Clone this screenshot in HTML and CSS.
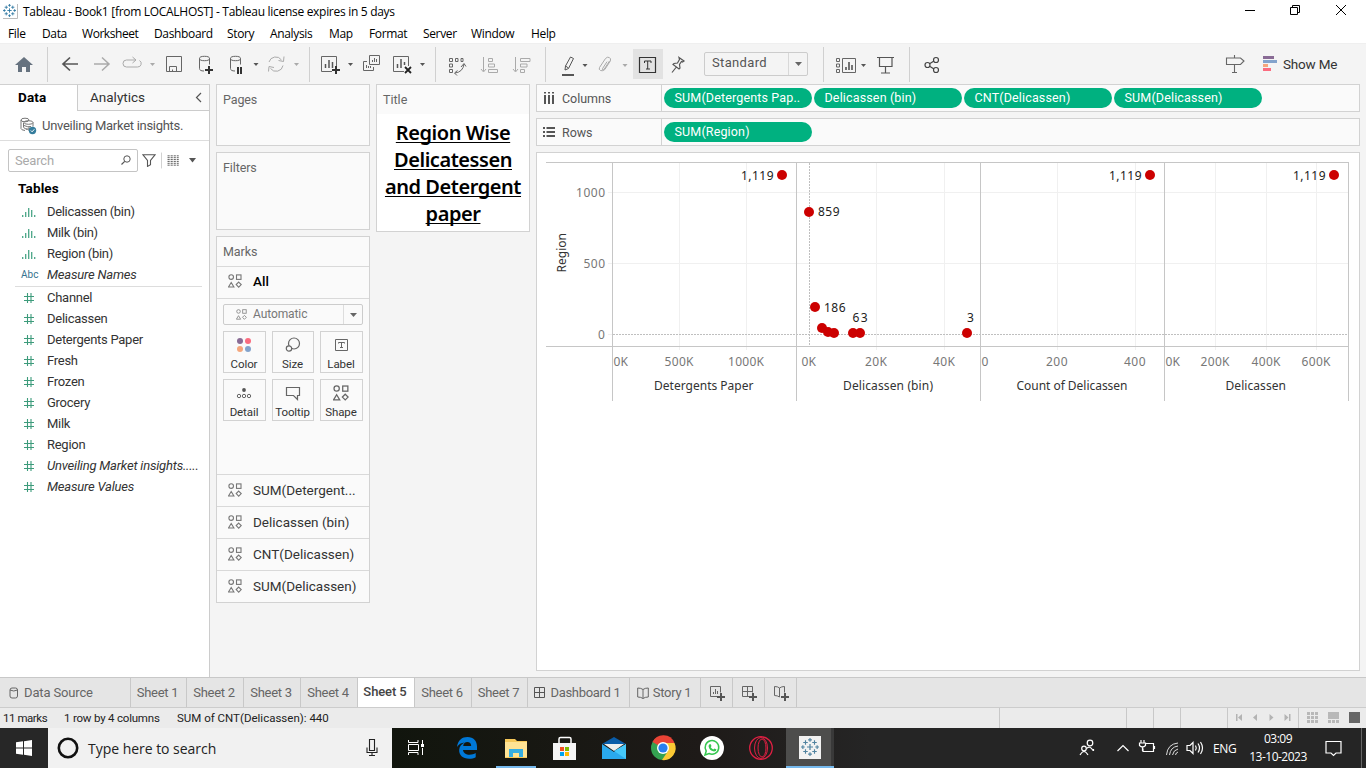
FILE: index.html
```html
<!DOCTYPE html>
<html lang="en">
<head>
<meta charset="utf-8">
<title>Tableau - Book1</title>
<link rel="stylesheet" href="styles.css">
</head>
<body>
<svg class="defs" width="0" height="0" aria-hidden="true">
  <symbol id="shapes" viewBox="0 0 14 14"><g fill="none" stroke="currentColor" stroke-width="1.1"><circle cx="3.2" cy="3.1" r="2.3"/><rect x="8.5" y=".9" width="4.500" height="4.500"/><path d="M3.2 8.500 5.900 13H.5ZM10.700 8.100l2.500 2.500-2.500 2.500-2.500-2.500Z"/></g></symbol>
  <symbol id="bins" viewBox="0 0 16 12"><path d="M1.700 11V9M4.700 11V6M7.700 11V2M10.700 11V4M13.700 11V9" stroke="currentColor" stroke-width="1.300"/></symbol>
  <symbol id="hash" viewBox="0 0 12 12"><path d="M1 4.500h10M1 8.500h10M4.500 1v10M8 1v10" stroke="currentColor" stroke-width="1.100"/></symbol>
  <symbol id="mark" viewBox="0 0 24 24"><g stroke="currentColor" fill="none"><path d="M12 8v8M8 12h8" stroke-width="1.600"/><path d="M12 0v5M9.500 2.500h5M12 19v5M9.500 21.500h5M0 12h5M2.500 9.500v5M19 12h5M21.500 9.500v5M6 3v6M3 6h6M18 3v6M15 6h6M6 15v6M3 18h6M18 15v6M15 18h6" stroke-width="1.500"/></g></symbol>
</svg>

<header class="titlebar">
  <svg class="app-icon" width="16" height="18" viewBox="0 0 16 18"><path d="M0 16.500h14.500V2" stroke="#bbb" fill="none"/><use href="#mark" x="0" y="2" width="13" height="13" color="#27749f"/></svg>
  <span class="win-title">Tableau - Book1 [from LOCALHOST] - Tableau license expires in 5 days</span>
  <svg class="win-controls" width="126" height="22" viewBox="1240 0 126 22"><g fill="none" stroke="#000"><path d="M1245 10.500h10M1290.500 7.500h7v7h-7zM1292.500 7.500v-2h7v7h-2M1336 5l10 10M1346 5l-10 10"/></g></svg>
</header>
<nav class="menubar">
  <span class="m1">File</span><span class="m2">Data</span><span class="m3">Worksheet</span><span class="m4">Dashboard</span><span class="m5">Story</span><span class="m6">Analysis</span><span class="m7">Map</span><span class="m8">Format</span><span class="m9">Server</span><span class="m10">Window</span><span class="m11">Help</span>
</nav>

<div class="toolbar">
  <svg width="47" viewBox="0 44 47 40"><path d="M24 57l9 8h-3v7h-4v-5h-4v5h-4v-7h-3z" fill="#66727f"/></svg>
  <i class="sep"></i>
  <svg width="38" viewBox="48 44 38 40"><path d="M78 64H63.500M70 57.500 63 64l7 6.500" stroke="#555" stroke-width="1.700"/></svg>
  <svg width="31" viewBox="86 44 31 40"><path d="M94 64h14.500M102 57.500l7 6.500-7 6.500" stroke="#aaa" stroke-width="1.500"/></svg>
  <svg width="43" viewBox="117 44 43 40"><path d="M135.500 60h-9a3.500 3.500 0 0 0 0 7h11a3.500 3.500 0 0 0 2-6.500M132.500 57l3.500 3-3.500 3" stroke="#aaa"/><path d="M150 63h5l-2.500 3z" fill="#aaa"/></svg>
  <svg width="30" viewBox="160 44 30 40"><path d="M166.500 56.500h15v15h-15zM169.500 71.500v-5h7v5M172.500 71.500v-2" stroke="#666"/></svg>
  <svg width="30" viewBox="190 44 30 40"><path d="M199.500 58.500v10q0 2.500 4.500 2.500M209.500 58.500v6" stroke="#666"/><ellipse cx="204.500" cy="58.500" rx="5" ry="2.200" stroke="#666"/><path d="M209 66v8M205 70h8" stroke="#333" stroke-width="2"/></svg>
  <svg width="42" viewBox="220 44 42 40"><path d="M230.500 58.500v10q0 2.500 4.500 2.500M240.500 58.500v6" stroke="#666"/><ellipse cx="235.500" cy="58.500" rx="5" ry="2.200" stroke="#666"/><path d="M238 67v7M241 67v7" stroke="#333" stroke-width="2"/><path d="M253.500 63h5l-2.500 3z" fill="#555"/></svg>
  <svg width="47" viewBox="262 44 47 40"><path d="M269 62a7 7 0 0 1 12.500-2M283 65.500a7 7 0 0 1-12.500 3M278.500 60.500l5 1 .5-5M274 67.500l-5-1-.5 5" stroke="#aaa"/><path d="M294 63h5l-2.500 3z" fill="#aaa"/></svg>
  <i class="sep"></i>
  <svg width="48" viewBox="310 44 48 40"><path d="M332 71.500h-10.500v-15h15V67" stroke="#666"/><path d="M325.500 68v-4M329 68v-8M332.500 68v-6" stroke="#555" stroke-width="1.500"/><path d="M336 66v8M332 70h8" stroke="#333" stroke-width="2"/><path d="M348 63h5l-2.500 3z" fill="#555"/></svg>
  <svg width="28" viewBox="358 44 28 40"><path d="M369.500 55.500h10v9h-10zM367 61.500h-3.500v9h10v-3.500M372.500 62v-2M374.500 62v-4M376.500 62v-3M366.500 68v-3M368.500 68v-2M370.500 68v-2" stroke="#666"/></svg>
  <svg width="49" viewBox="386 44 49 40"><path d="M404 71.500h-10.500v-15h15V66" stroke="#666"/><path d="M397.500 68v-4M401 68v-9M404.500 65v-3" stroke="#555" stroke-width="1.500"/><path d="M405 67l6 6M411 67l-6 6" stroke="#222" stroke-width="1.800"/><path d="M420 63h5l-2.500 3z" fill="#555"/></svg>
  <i class="sep"></i>
  <svg width="38" viewBox="436 44 38 40"><path d="M449.500 58.500h3v3h-3zM455.500 58.500h2.500v3h-2.500zM461 58.500h2v3h-2zM449.500 64h3v3h-3zM449.500 69.500h3v3h-3zM455 73q8-1 9-9M457.500 70.500l-3 2.500 2.500 2.500M461 67l3-3.500 2 3" stroke="#666"/></svg>
  <svg width="32" viewBox="474 44 32 40"><path d="M483.500 57v14M481 69l2.500 3 2.500-3M488.500 58.500h4v3h-4zM488.500 64h6v3h-6zM488.500 69.500h9v3h-9z" stroke="#aaa"/></svg>
  <svg width="39" viewBox="506 44 39 40"><path d="M515.500 57v14M513 69l2.500 3 2.500-3M520.500 58.500h9.500v3h-9.500zM520.500 64h6.500v3h-6.500zM520.500 69.500h4v3h-4z" stroke="#aaa"/></svg>
  <i class="sep"></i>
  <svg width="46" viewBox="546 44 46 40"><path d="M570.500 57l3 1.500-5 10-3.500 1.500.5-4zM565.500 66l3 2" stroke="#555"/><path d="M562 75h12" stroke="#555" stroke-width="2"/><path d="M582.500 64h5l-2.500 3z" fill="#555"/></svg>
  <svg width="41" viewBox="592 44 41 40"><path d="M609.500 61l-5.500 8.500q-1.500 2-3.500 1t-1-3l6-9q1.800-2 3.800-1t1 3.500l-5.500 8.500q-1.200 1.200-2 .5t0-1.800l4.200-6.500" stroke="#aaa"/><path d="M622.500 64h5l-2.500 3z" fill="#aaa"/></svg>
  <svg class="pressed" width="30" viewBox="633 49 30 30"><path d="M639.500 57.500h16v15h-16z" stroke="#333" stroke-width="1.200"/><path d="M644.500 63v-2h6.500v2M647.700 61v8M646 69h4" stroke="#333"/></svg>
  <svg width="41" viewBox="663 44 41 40"><path d="M679 57.500l5 3.500-1.500 1-1-.5-2 3 .5 3.500-1 1-6-4.500 1-1 3.500-.5 2-3.500zM676 67.500l-4 5" stroke="#555" stroke-width="1.200"/></svg>
  <div class="fit-select"><span>Standard</span><b><svg width="7" height="4" viewBox="0 0 7 4"><path d="M0 0h7L3.500 4z" fill="#666"/></svg></b></div>
  <i class="sep after-select"></i>
  <svg width="46" viewBox="824 44 46 40"><path d="M836.500 58.500h3v3h-3zM836.500 64h3v3h-3zM836.500 69.500h3v3h-3zM842.500 58.500h13v14h-13z" stroke="#666"/><path d="M846 70v-3M849 70v-8M852 70v-5" stroke="#555" stroke-width="1.600"/><path d="M861 64h5l-2.500 3z" fill="#555"/></svg>
  <svg width="39" viewBox="870 44 39 40"><path d="M877 57.500h17M879.500 57.500v9h12.500v-9M885.500 66.500v6.500M881 73h9" stroke="#555" stroke-width="1.200"/></svg>
  <i class="sep"></i>
  <svg width="40" viewBox="910 44 40 40"><g stroke="#444" stroke-width="1.200"><circle cx="927.500" cy="65" r="2.500"/><circle cx="936" cy="60" r="2.500"/><circle cx="936" cy="70" r="2.500"/><path d="M930 63.500l4-2.500M930 66.500l4 2.500"/></g></svg>
  <svg class="guide" width="28" viewBox="1222 44 28 40"><path d="M1226.500 58h14l3.500 3-3.500 3.500h-14zM1234.500 55v3M1234.500 64.500V73M1232 72.500h5" stroke="#666" stroke-width="1.100"/></svg>
  <div class="show-me"><svg width="14" height="16" viewBox="0 0 14 16"><path d="M0 0h11v3H0z" fill="#896b95"/><path d="M0 4h14v3H0z" fill="#83a3cc"/><path d="M0 8h5v3H0z" fill="#f5a67c"/><path d="M0 12h8v3H0z" fill="#fb6c7f"/></svg><span>Show Me</span></div>
</div>

<main class="workspace">
  <aside class="data-pane">
    <div class="pane-tabs"><div class="tab-data">Data</div><div class="tab-analytics"><span>Analytics</span><svg width="7" height="11" viewBox="0 0 7 11"><path d="M6 1 1.500 5.500 6 10" fill="none" stroke="#555" stroke-width="1.200"/></svg></div></div>
    <div class="source"><svg width="17" height="18" viewBox="20 116 17 18"><g fill="none" stroke="#777"><ellipse cx="25" cy="119" rx="4" ry="1.800"/><path d="M21 119v8.500q0 1.500 4 2M23.500 122v4q0 1.500 4 2.500"/><ellipse cx="28.500" cy="121.500" rx="4.500" ry="1.800"/><path d="M33 121.500v4M24 124.500q4 2 7 1M26 128h5M29 126v4"/></g><circle cx="32.500" cy="129.500" r="3.700" fill="#357d9d"/><path d="M30.800 129.500l1.300 1.300 2.200-2.500" fill="none" stroke="#fff"/></svg><span>Unveiling Market insights.</span></div>
    <div class="search-row">
      <div class="search"><span>Search</span><svg width="10" height="10" viewBox="0 0 10 10"><circle cx="6" cy="4" r="3.200" fill="none" stroke="#555"/><path d="M3.700 6.300.5 9.500" stroke="#555" stroke-width="1.200"/></svg></div>
      <svg class="funnel" width="14" height="13" viewBox="0 0 14 13"><path d="M.8.700h12.400L8.500 6.500v4.200l-3 1.700V6.500z" fill="none" stroke="#555" stroke-width="1.100"/></svg>
      <svg class="listview" width="30" height="17" viewBox="0 0 30 17"><path d="M.5 0v17" stroke="#ccc"/><g stroke="#555" stroke-width="1" stroke-dasharray="2.300 1"><path d="M7 3.500h12M7 5.500h12M7 7.500h12M7 9.500h12M7 11.500h12M7 13.500h12"/></g></svg>
      <svg width="7" height="5" viewBox="0 0 7 5"><path d="M0 0h7L3.500 4.500z" fill="#555"/></svg>
    </div>
    <div class="tables-title">Tables</div>
    <ul class="fields dims">
      <li><svg><use href="#bins"/></svg>Delicassen (bin)</li>
      <li><svg><use href="#bins"/></svg>Milk (bin)</li>
      <li><svg><use href="#bins"/></svg>Region (bin)</li>
      <li class="it"><em>Abc</em>Measure Names</li>
    </ul>
    <ul class="fields meas">
      <li><svg><use href="#hash"/></svg>Channel</li>
      <li><svg><use href="#hash"/></svg>Delicassen</li>
      <li><svg><use href="#hash"/></svg>Detergents Paper</li>
      <li><svg><use href="#hash"/></svg>Fresh</li>
      <li><svg><use href="#hash"/></svg>Frozen</li>
      <li><svg><use href="#hash"/></svg>Grocery</li>
      <li><svg><use href="#hash"/></svg>Milk</li>
      <li><svg><use href="#hash"/></svg>Region</li>
      <li class="it"><svg><use href="#hash"/></svg>Unveiling Market insights.....</li>
      <li class="it"><svg><use href="#hash"/></svg>Measure Values</li>
    </ul>
  </aside>

  <section class="cards">
    <div class="card pages">Pages</div>
    <div class="card filters">Filters</div>
    <div class="card marks">
      <div class="marks-head">Marks</div>
      <div class="mark-row all"><svg><use href="#shapes"/></svg>All</div>
      <div class="mark-body">
        <div class="mark-type"><svg width="11" height="11"><use href="#shapes"/></svg><span>Automatic</span><b><svg width="7" height="4" viewBox="0 0 7 4"><path d="M0 0h7L3.500 4z" fill="#666"/></svg></b></div>
        <div class="mark-grid">
          <div><svg viewBox="0 0 16 16"><circle cx="4" cy="4" r="3" fill="#896b95"/><circle cx="12" cy="4" r="3" fill="#fb6c7f"/><circle cx="4" cy="12" r="3" fill="#f5a67c"/><circle cx="12" cy="12" r="3" fill="#83a3cc"/></svg>Color</div>
          <div><svg viewBox="0 0 16 16"><g fill="none" stroke="#666" stroke-width="1.200"><circle cx="9" cy="6.500" r="5.500"/><circle cx="4" cy="11.500" r="2.700" fill="#fafafa"/></g></svg>Size</div>
          <div><svg viewBox="0 0 16 16"><path d="M2.500 2.500h12v11h-12zM5.500 6.500v-1h6v1M8.500 5.500v5M7 10.500h3" fill="none" stroke="#666"/></svg>Label</div>
          <div><svg viewBox="0 0 16 16"><circle cx="8" cy="5" r="1.900" fill="#555"/><g fill="none" stroke="#666"><circle cx="3" cy="11" r="1.700"/><circle cx="8" cy="11" r="1.700"/><circle cx="13" cy="11" r="1.700"/></g></svg>Detail</div>
          <div><svg viewBox="0 0 16 16"><path d="M1.500 2.500h13v8h-2v4l-4-4h-7z" fill="none" stroke="#666" stroke-width="1.200"/></svg>Tooltip</div>
          <div><svg><use href="#shapes"/></svg>Shape</div>
        </div>
      </div>
      <div class="mark-row"><svg><use href="#shapes"/></svg>SUM(Detergent...</div>
      <div class="mark-row"><svg><use href="#shapes"/></svg>Delicassen (bin)</div>
      <div class="mark-row"><svg><use href="#shapes"/></svg>CNT(Delicassen)</div>
      <div class="mark-row"><svg><use href="#shapes"/></svg>SUM(Delicassen)</div>
    </div>
  </section>

  <section class="title-card">
    <div class="title-head">Title</div>
    <h1>Region Wise<br>Delicatessen<br>and Detergent<br>paper</h1>
  </section>

  <section class="view">
    <div class="shelf"><div class="shelf-label"><svg width="12" height="12" viewBox="0 0 12 12"><path d="M2 0v1.500M6 0v1.500M10 0v1.500M2 3v9M6 3v9M10 3v9" stroke="#555" stroke-width="2"/></svg>Columns</div>
      <span class="pill">SUM(Detergents Pap..</span><span class="pill">Delicassen (bin)</span><span class="pill">CNT(Delicassen)</span><span class="pill">SUM(Delicassen)</span></div>
    <div class="shelf"><div class="shelf-label"><svg width="12" height="12" viewBox="0 0 12 12"><path d="M0 2h2M0 6h2M0 10h2M3.500 2H12M3.500 6H12M3.500 10H12" stroke="#555" stroke-width="1.800"/></svg>Rows</div>
      <span class="pill">SUM(Region)</span></div>
    <div class="chart">
      <svg width="822" height="260" viewBox="537 153 822 260">
        <g fill="none" stroke="#f0f0f0"><path d="M608 192.500H1348M608 263.500H1348M679.500 163V350M746.500 163V350M876.500 163V350M944.500 163V350M1057.500 163V350M1135.500 163V350M1215.500 163V350M1266.500 163V350M1316.500 163V350"/></g>
        <path d="M608 334.500h4" stroke="#f0f0f0"/>
        <path d="M613 334.500H1348M809.500 163V346" stroke="#bfbfbf" stroke-dasharray="2 1" fill="none"/>
        <path d="M546 162.500H1349M546 346.500H1349M612.500 162V401M796.500 162V401M980.500 162V401M1164.500 162V401M1348.500 162V401" stroke="#c6c6c6" fill="none"/>
        <g fill="#c00"><circle cx="782" cy="175" r="5"/><circle cx="809" cy="212" r="5"/><circle cx="815" cy="307" r="5"/><circle cx="822" cy="328" r="5"/><circle cx="828" cy="332" r="5"/><circle cx="834" cy="333" r="5"/><circle cx="853" cy="333" r="5"/><circle cx="860" cy="333" r="5"/><circle cx="967" cy="333" r="5"/><circle cx="1150" cy="175" r="5"/><circle cx="1334" cy="175" r="5"/></g>
        <g class="val"><text x="741" y="180" textLength="32.500">1,119</text><text x="1109" y="180" textLength="32.500">1,119</text><text x="1293" y="180" textLength="32.500">1,119</text><text x="818" y="216" textLength="21.500">859</text><text x="824" y="312" textLength="21.500">186</text><text x="852.500" y="322" textLength="15">63</text><text x="967" y="322">3</text></g>
        <g class="tick"><text x="576" y="197" textLength="29">1000</text><text x="583.500" y="268" textLength="21.500">500</text><text x="598" y="339">0</text>
          <text x="613.500" y="366" textLength="14.500">0K</text><text x="664.500" y="366" textLength="29">500K</text><text x="728" y="366" textLength="36">1000K</text>
          <text x="801.500" y="366" textLength="14.500">0K</text><text x="865" y="366" textLength="22">20K</text><text x="933" y="366" textLength="22">40K</text>
          <text x="981.500" y="366">0</text><text x="1046" y="366" textLength="21.500">200</text><text x="1124" y="366" textLength="21.500">400</text>
          <text x="1165.500" y="366" textLength="14.500">0K</text><text x="1200.500" y="366" textLength="29">200K</text><text x="1251.500" y="366" textLength="29">400K</text><text x="1301.500" y="366" textLength="29">600K</text></g>
        <g class="axis"><text x="654" y="390" textLength="99.500">Detergents Paper</text><text x="843" y="390" textLength="90">Delicassen (bin)</text><text x="1016.500" y="390" textLength="111">Count of Delicassen</text><text x="1225.500" y="390" textLength="60.500">Delicassen</text><text transform="translate(566 272.500) rotate(-90)" textLength="39.500">Region</text></g>
      </svg>
    </div>
  </section>
</main>

<div class="sheet-tabs">
  <div class="w130 ds"><svg width="10" height="12" viewBox="0 0 10 12"><rect x="1" y="1" width="7.500" height="10" rx="2" fill="none" stroke="#666"/><path d="M1 3q3.700 2 7.500 0" fill="none" stroke="#666"/></svg>Data Source</div>
  <div class="w56">Sheet 1</div><div class="w57">Sheet 2</div><div class="w57">Sheet 3</div><div class="w57">Sheet 4</div><div class="w57 active">Sheet 5</div><div class="w57">Sheet 6</div><div class="w56">Sheet 7</div>
  <div class="dash"><svg width="11" height="11" viewBox="0 0 11 11"><path d="M.5.500h10v10H.5zM5.500.500v10M.5 5.500h10" fill="none" stroke="#555"/></svg>Dashboard 1</div>
  <div class="story"><svg width="12" height="12" viewBox="0 0 12 12"><path d="M6 2.500v9M6 2.500Q4 1 .7 1v9Q4 10 6 11.500 8 10 11.300 10V1Q8 1 6 2.500" fill="none" stroke="#666"/></svg>Story 1</div>
  <div class="add"><svg width="16" height="16" viewBox="0 0 16 16"><path d="M7 10.500H.5V.500h10v6M3.500 8V6M5.500 8V3M7.500 8V5" fill="none" stroke="#666"/><path d="M11 7v8M7 11h8" stroke="#555" stroke-width="2"/></svg></div>
  <div class="add"><svg width="16" height="16" viewBox="0 0 16 16"><path d="M7 10.500H.5V.500h10v6M5.500.500v10M.5 5.500h10" fill="none" stroke="#666"/><path d="M11 7v8M7 11h8" stroke="#555" stroke-width="2"/></svg></div>
  <div class="add"><svg width="16" height="16" viewBox="0 0 16 16"><path d="M5.500 2v9Q3.500 9.500.5 9.500v-9Q4 .500 5.500 2 7.500.500 10.500.500v6" fill="none" stroke="#666"/><path d="M11 7v8M7 11h8" stroke="#555" stroke-width="2"/></svg></div>
</div>
<div class="status"><span class="st1">11 marks</span><span class="st2">1 row by 4 columns</span><span class="st3">SUM of CNT(Delicassen): 440</span>
  <svg class="status-nav" width="367" height="20" viewBox="999 708 367 20"><path d="M999.500 708v20M1126.500 708v20M1153.500 708v20M1180.500 708v20M1227.500 708v20M1298.500 708v20" stroke="#c8c8c8"/><path d="M1236 714h1.500v7H1236zM1242 714v7l-4-3.500zM1257 714v7l-4-3.500zM1269.500 714v7l4-3.500zM1284.500 714v7l4-3.500zM1289 714h1.500v7H1289z" fill="#b3b3b3"/><path d="M1308.500 712v11M1312.500 712v11M1316.500 712v11" stroke="#b8b8b8" stroke-width="3" stroke-dasharray="3 1"/><path d="M1328 712h11v7h-11zM1328 720h3v3h-3zM1332 720h3v3h-3zM1336 720h3v3h-3z" fill="#b8b8b8"/><path d="M1349 712h11v11h-11z" fill="#666"/></svg>
</div>

<footer class="taskbar">
  <div class="start"><svg width="16" height="16" viewBox="0 0 16 16"><path d="M0 2.300 7 1.300v6.300H0zM8 1.200 16 0v7.600H8zM0 8.500h7v6.300l-7-1zM8 8.500h8V16l-8-1.200z" fill="#fff"/></svg></div>
  <div class="tb-search"><svg width="22" height="22" viewBox="0 0 22 22"><circle cx="11" cy="11" r="9.200" fill="none" stroke="#111" stroke-width="2.600"/></svg><span>Type here to search</span><svg class="mic" width="12" height="18" viewBox="0 0 12 18"><path d="M3.500.500h5v11h-5zM1 8.500v5h10v-5M6 13.500v3.500M3 16.500h6" fill="none" stroke="#222" stroke-width="1.100"/></svg></div>
  <svg class="tb-apps" width="448" height="40" viewBox="392 728 448 40">
    <path d="M786 728h45v40h-45z" fill="#4d4d4c"/><path d="M831 728h3v40h-3z" fill="#393939"/><path d="M496 766h40v2h-40zM786 766h48v2h-48z" fill="#76b9ed"/>
    <g fill="none" stroke="#fff"><path d="M408.500 740v2.500h9.500V740M408.500 755v-2.500h9.500V755M408.500 744.500h10v6h-10zM422.500 740v4M422.500 748v7"/></g><path d="M421 744h3v3h-3z" fill="#fff"/>
    <path d="M457 747c1-7 5-10 10.500-10 6 0 9.500 4 9.500 9.500V750h-14c.3 3 3 4.800 6.500 4.800 2.500 0 4.500-.6 6.200-1.700v4.200c-2 1-4 1.500-6.500 1.500-6.500 0-10.500-4-10-9.300.3-3.300 2.500-5.700 5.500-7-3.500.2-6 1.800-7.700 4.500zm6.200-1h8c0-2.500-1.500-4-3.900-4-2.200 0-3.800 1.500-4.100 4z" fill="#0078d7"/>
    <path d="M505 739h10l2 2h10v17h-22z" fill="#f6c859"/><path d="M505 742h22v15h-22z" fill="#ffe394"/><path d="M509 749h14v8h-4v-4h-6v4h-4z" fill="#36aee2"/>
    <path d="M559 743v-4q0-1.500 1.500-1.500h9q1.500 0 1.500 1.500v4" fill="none" stroke="#fff" stroke-width="1.500"/><path d="M553 743h23v17h-23z" fill="#f5f5f5"/><path d="M560 747h4v4h-4z" fill="#f25022"/><path d="M565 747h4v4h-4z" fill="#7fba00"/><path d="M560 752h4v4h-4z" fill="#00a4ef"/><path d="M565 752h4v4h-4z" fill="#ffb900"/>
    <path d="M602 744l12-7 12 7z" fill="#0a5ca8"/><path d="M602 744v15h24v-15l-12 8z" fill="#2aa9ee"/><path d="M604 744h20l-10 7z" fill="#eee"/><path d="M614 751l12-7v15z" fill="#45c8fa"/>
    <circle cx="663" cy="748" r="12" fill="#34a251"/><path d="M663 748 652.500 742A12 12 0 0 1 674.500 743z" fill="#e94335"/><path d="M663 743h11.500A12 12 0 0 1 662 760l6-9z" fill="#fcc934"/><circle cx="663" cy="748" r="6" fill="#fff"/><circle cx="663" cy="748" r="4.600" fill="#287ff0"/>
    <circle cx="712" cy="748" r="12" fill="#fff"/><path d="M705 755l1.200-4A6.800 6.800 0 1 1 709 753.500z" fill="none" stroke="#35c64f" stroke-width="1.500"/><path d="M709.200 744.500l1.300-.5 1 2-.8 1.200q1 1.600 2.600 2.300l1.200-1 2 1q-.2 2-2.500 2-5-1-5.500-5.500z" fill="#35c64f"/>
    <g fill="none" stroke="#df2043"><circle cx="761" cy="748" r="11.300" stroke-width="1.300"/><ellipse cx="761" cy="748" rx="6.500" ry="10.500"/><ellipse cx="762" cy="748" rx="4" ry="9"/></g>
    <path d="M799 736h22v23h-22z" fill="#f2f2f2"/><use href="#mark" x="801" y="738" width="18" height="18" color="#4f829f"/>
  </svg>
  <svg class="tray" width="140" height="40" viewBox="1070 728 140 40"><g fill="none" stroke="#fff" stroke-width="1.200"><circle cx="1090" cy="743" r="2.800"/><path d="M1086.500 748.500q3.500-3.500 6.500 2M1093.500 751v-2"/><circle cx="1084" cy="748.500" r="2.300"/><path d="M1080 755q4-7 8 0M1117.500 751l5.500-5.500 5.500 5.500"/><path d="M1145 743.500h8.500v8h-10.500v-3M1154.500 746v3M1141 743v-3M1144 743v-3M1139.500 743h6v2.500q-3 3-6 0zM1142.500 747v4"/><path d="M1187 745.500h3l3-3v11l-3-3h-3zM1195.500 745.500q1.500 2.500 0 5M1198 743.500q3 4.500 0 9M1200.500 742q4 6 0 12"/></g><g fill="none" stroke="#ddd"><path d="M1166.500 755q1-11 11.500-12M1169.500 755q1-8 8.500-9M1172.500 755q1-5 5.500-6M1175.500 755q.5-2.500 2.500-3"/></g></svg>
  <span class="lang">ENG</span>
  <div class="clock"><span class="time">03:09</span><span>13-10-2023</span></div>
  <svg class="notify" width="17" height="17" viewBox="0 0 17 17"><path d="M1 1.500h15v11.500h-5l-2.500 2.500L6 13H1z" fill="none" stroke="#fff" stroke-width="1.200"/></svg>
  <i class="peek"></i>
</footer>
</body>
</html>
```

FILE: styles.css
```css
* { box-sizing: border-box; }
body { margin: 0; width: 1366px; height: 768px; overflow: hidden; background: #f4f4f4; font-family: Roboto, "Open Sans", sans-serif; font-size: 13px; color: #333; display: flex; flex-direction: column; white-space: nowrap; }
svg { display: block; flex: none; }
.defs { height: 0; }
.titlebar { height: 24px; background: #fff; display: flex; align-items: flex-start; padding-left: 3px; font-family: "Open Sans", sans-serif; font-size: 12px; color: #000; flex: none; }
.app-icon { margin: 2px 4px 0 0; }
.win-title { line-height: 24px; letter-spacing: -0.295px; }
.win-controls { margin-left: auto; }
.menubar { height: 19px; background: #fff; display: flex; font-family: "Open Sans", sans-serif; font-size: 12px; line-height: 20px; color: #000; padding-left: 8px; letter-spacing: -0.35px; flex: none; }
.menubar .m3 { letter-spacing: -0.45px; }
.m1 { width: 34px; } .m2 { width: 40px; } .m3 { width: 72px; } .m4 { width: 73px; } .m5 { width: 43px; } .m6 { width: 59px; } .m7 { width: 40px; } .m8 { width: 54px; } .m9 { width: 48px; } .m10 { width: 60px; }
.toolbar { height: 41px; border-top: 1px solid #efefef; background: #f4f4f4; display: flex; align-items: center; flex: none; }
.toolbar > svg { height: 40px; fill: none; }
.toolbar > .pressed { height: 30px; background: #e2e2e2; }
.sep { width: 1px; height: 35px; background: #d0d0d0; flex: none; }
.after-select { margin-left: 15px; }
.fit-select { width: 104px; height: 24px; border: 1px solid #ccc; border-radius: 2px; display: flex; justify-content: space-between; align-items: center; padding-left: 7px; color: #555; letter-spacing: .35px; font-size: 13px; line-height: 20px; flex: none; }
.fit-select span { margin-bottom: 2px; }
.fit-select b { width: 19px; height: 22px; border-left: 1px solid #d8d8d8; display: grid; place-items: center; }
.guide { margin-left: auto; }
.show-me { display: flex; align-items: center; gap: 6px; margin-left: 13px; width: 103px; font-size: 13.5px; letter-spacing: -.2px; }
.show-me span { margin-bottom: 1px; }
.workspace { height: 593px; display: flex; flex: none; }
.data-pane { width: 210px; border-right: 1px solid #ccc; background: #fff; border-top: 1px solid #d0d0d0; }
.pane-tabs { display: flex; height: 26px; line-height: 25px; font-size: 13.5px; }
.tab-data { width: 77px; padding-left: 18px; font-weight: 700; color: #000; letter-spacing: .15px; }
.tab-analytics { flex: 1; border-left: 1px solid #ccc; border-bottom: 1px solid #ccc; background: #f9f9f9; display: flex; justify-content: space-between; align-items: center; padding: 0 7px 0 12px; }
.source { height: 30px; border-bottom: 1px solid #ddd; display: flex; align-items: center; gap: 5px; padding-left: 20px; color: #555; letter-spacing: -.29px; }
.search-row { display: flex; align-items: center; height: 24px; margin: 7px 0 0 8px; }
.search { width: 130px; height: 23px; border: 1px solid #c4c4c4; border-radius: 2px; display: flex; align-items: center; justify-content: space-between; padding: 0 6px 0 6px; color: #aaa; letter-spacing: -.15px; }
.funnel { margin-left: 4px; }
.listview { margin: 0 0 0 5px; width: 28px; }
.tables-title { font-weight: 700; color: #000; padding-left: 18px; height: 28px; line-height: 32px; margin-bottom: 1px; font-size: 13.5px; letter-spacing: .15px; }
.fields { list-style: none; margin: 0; padding: 0; letter-spacing: -.27px; }
.dims { letter-spacing: -.33px; }
.fields li { height: 21px; display: flex; align-items: center; }
.fields li svg, .fields li em { margin-left: 21px; width: 26px; }
.dims svg { height: 12px; width: 16px !important; margin-right: 10px; color: #4ba687; }
.meas svg { height: 12px; width: 12px !important; margin: 0 12px 0 23px !important; color: #3d9b7b; }
.fields em { font-style: normal; font-size: 10px; font-weight: 400; color: #38738f; letter-spacing: .1px; }
.it { font-style: italic; letter-spacing: -.2px; }
.meas { margin: 1px 7px 0 15px; border-top: 1px solid #ddd; }
.meas li { margin-left: -15px; }
.cards { width: 154px; margin-left: 6px; display: flex; flex-direction: column; gap: 6px; color: #666; font-size: 12.5px; letter-spacing: -.1px; }
.card { border: 1px solid #d2d2d2; background: #fafafa; padding-left: 6px; line-height: 30px; }
.pages { height: 62px; } .filters { height: 78px; }
.marks { height: 367px; padding: 0; }
.marks-head { padding-left: 6px; height: 29px; }
.mark-row { border-top: 1px solid #d9d9d9; height: 32px; line-height: 28px; padding: 0 0 1px 11px; display: flex; align-items: center; color: #333; font-size: 13.5px; letter-spacing: 0; }
.mark-row svg { width: 14px; height: 14px; margin-right: 11px; color: #777; }
.mark-row.all { font-weight: 500; color: #000; padding-bottom: 3px; }
.mark-body { height: 176px; border-top: 1px solid #d9d9d9; padding: 5px 6px; }
.mark-type { width: 140px; height: 21px; border: 1px solid #ccc; border-radius: 2px; display: flex; align-items: center; padding-left: 12px; color: #777; line-height: 19px; font-size: 12px; }
.mark-type > svg { color: #888; margin-right: 6px; }
.mark-type b { margin-left: auto; width: 19px; height: 19px; border-left: 1px solid #ddd; display: grid; place-items: center; }
.mark-grid { margin-top: 6px; display: grid; grid-template-columns: 43px 42px 43px; column-gap: 6px; row-gap: 6px; }
.mark-grid div { height: 42px; border: 1px solid #d2d2d2; display: flex; flex-direction: column; align-items: center; color: #333; font-size: 11.5px; line-height: 15px; padding: 5px 1px 0 0; }
.mark-grid svg { width: 16px; height: 16px; margin-bottom: 4px; color: #666; }
.title-card { width: 154px; height: 148px; border: 1px solid #d2d2d2; margin-left: 6px; background: #fff; }
.title-head { background: #fafafa; height: 29px; line-height: 30px; padding-left: 6px; color: #666; font-size: 12.5px; }
.title-card h1 { margin: 5px 0 0; text-align: center; font: 600 20px/27px "Noto Sans", sans-serif; letter-spacing: -.45px; color: #000; text-decoration: underline; text-decoration-skip-ink: none; text-underline-offset: 2px; text-decoration-thickness: 1px; }
.view { margin-left: 6px; width: 824px; display: flex; flex-direction: column; gap: 6px; }
.shelf { height: 28px; border: 1px solid #d2d2d2; background: #fafafa; display: flex; align-items: center; gap: 2px; }
.shelf-label { width: 125px; height: 26px; border-right: 1px solid #d2d2d2; display: flex; align-items: center; gap: 7px; padding-left: 6px; color: #555; font-size: 12.5px; letter-spacing: -.05px; }
.pill { width: 148px; height: 20px; border-radius: 10px; background: #00b180; color: #fff; line-height: 20px; padding-left: 10.5px; font-size: 12.5px; letter-spacing: .15px; }
.chart { height: 519px; border: 1px solid #d2d2d2; background: #fff; }
.chart text { font-family: "Noto Sans", sans-serif; font-size: 12px; }
.val { fill: #222; } .tick { fill: #777; } .axis { fill: #333; }
.sheet-tabs { height: 31px; border-top: 1px solid #c8c8c8; border-bottom: 1px solid #ccc; background: #e5e5e5; display: flex; color: #666; flex: none; line-height: 29px; letter-spacing: -.3px; }
.sheet-tabs > div { border-right: 1px solid #c8c8c8; text-align: center; height: 29px; flex: none; display: flex; align-items: center; justify-content: center; padding-right: 2px; }
.w130 { width: 131px; } .w57 { width: 57px; } .w56 { width: 56px; }
.sheet-tabs .ds { justify-content: flex-start; padding-left: 9px; gap: 5px; letter-spacing: -.15px; }
.sheet-tabs .active { background: #fff; color: #444; font-weight: 500; padding-bottom: 3px; letter-spacing: -.1px; }
.dash { width: 102px; gap: 5px; } .story { width: 71px; gap: 4px; } .add { width: 32px; }
.sheet-tabs .add svg { margin: 2px 0 0 4px; }
.status { height: 20px; background: #ebebeb; display: flex; line-height: 20px; font-size: 11.5px; padding-left: 3px; flex: none; color: #222; }
.st1 { width: 61px; letter-spacing: -.45px; } .st2 { width: 113px; letter-spacing: -.2px; }
.status-nav { margin-left: auto; }
.taskbar { height: 40px; background: linear-gradient(90deg, #11150d 392px, #1e1a18 700px, #252525 870px); display: flex; align-items: center; flex: none; font-family: "Open Sans", sans-serif; color: #fff; }
.start { width: 48px; height: 40px; background: #272727; display: grid; place-items: center; }
.tb-search { width: 344px; height: 40px; background: #f1f1f1; color: #222; display: flex; align-items: center; padding-left: 9px; font-size: 14px; gap: 9px; letter-spacing: -.03px; }
.mic { margin: 0 14px 0 auto; }
.tray { margin-left: 230px; }
.lang { margin-left: 3px; width: 30px; font-size: 12px; letter-spacing: -.35px; }
.clock { width: 70px; display: flex; flex-direction: column; align-items: center; font-size: 12px; line-height: 18px; letter-spacing: -.5px; }
.notify { margin-left: 12px; }
.peek { width: 1px; height: 40px; margin-left: 19px; background: #666; }
```
